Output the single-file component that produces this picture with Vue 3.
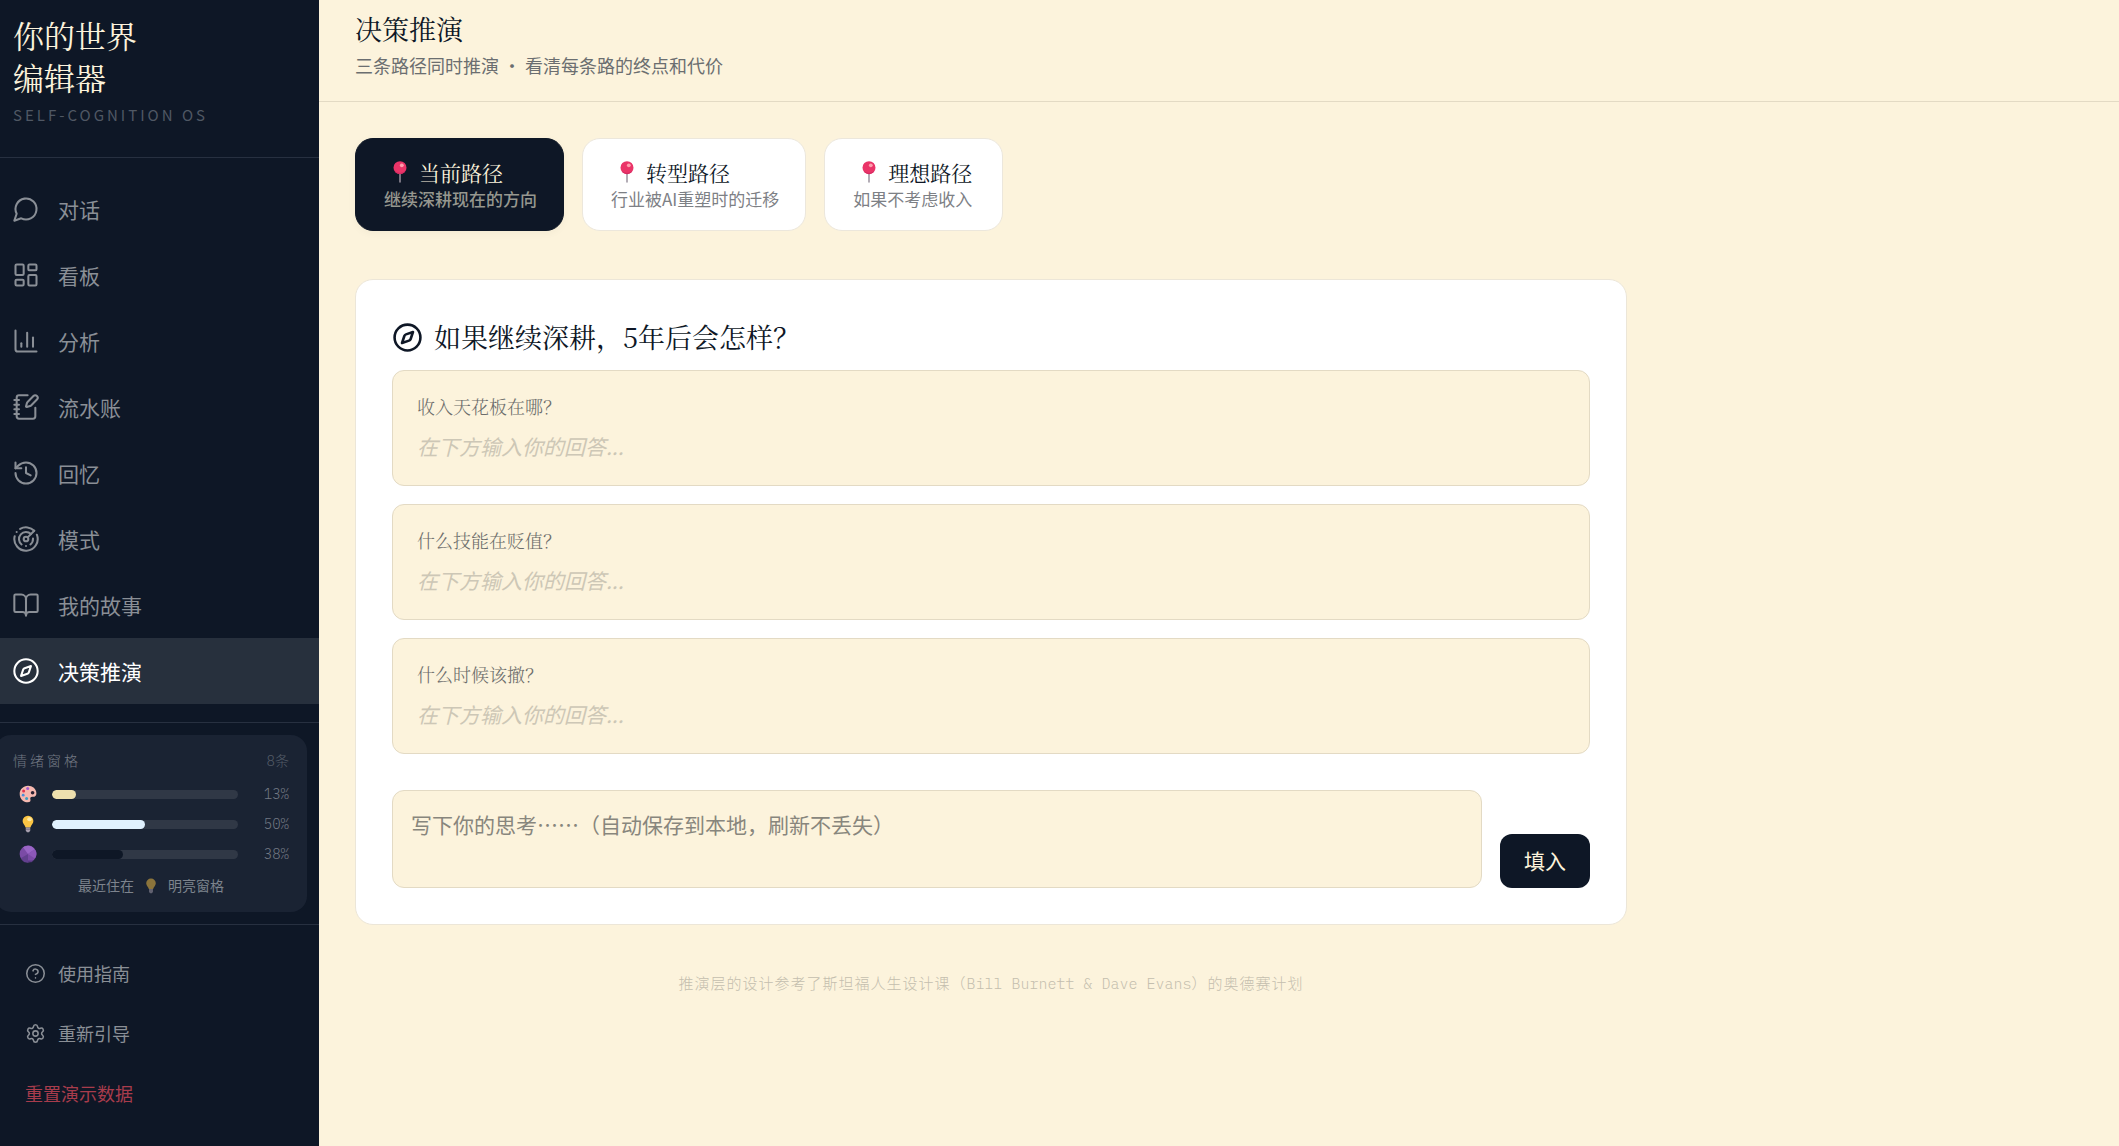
<template>
  <div class="layout">
    <!-- 侧边栏 -->
    <aside class="sidebar">
      <div class="brand">
        <h1 class="brand-title">你的世界<br>编辑器</h1>
        <p class="brand-sub">SELF-COGNITION OS</p>
      </div>
      <nav class="nav">
        <a
          v-for="item in navItems"
          :key="item.label"
          href="#"
          class="nav-item"
          :class="{ active: item.label === currentNav }"
          @click.prevent="currentNav = item.label"
        >
          <svg class="nav-icon" viewBox="0 0 24 24">
            <path v-for="d in item.icon" :key="d" :d="d" />
          </svg>
          <span>{{ item.label }}</span>
        </a>
      </nav>

      <!-- 情绪窗格 -->
      <section class="mood-wrap">
        <div class="mood">
          <div class="mood-head">
            <span class="mood-title">情绪窗格</span>
            <span class="mood-count">8条</span>
          </div>
          <div v-for="mood in moods" :key="mood.name" class="mood-row">
            <svg v-if="mood.name === 'palette'" class="mood-icon" viewBox="0 0 18 18">
              <path d="M9 .8C4.3.8.7 4.4.7 9c0 4.700 3.600 8.300 8 8.300 2.500 0 3.100-1.400 2.700-2.800-.5-1.700.3-2.800 2-2.700 2.300.2 4-.8 4-3.600C17.300 3.900 13.500.8 9 .8z" fill="#f6b9b0" />
              <circle cx="13.600" cy="7.800" r="1.800" fill="#2b2030" />
              <circle cx="8.700" cy="3.600" r="1.500" fill="#a45bd0" />
              <circle cx="4.600" cy="5.900" r="1.500" fill="#e2364f" />
              <circle cx="4.200" cy="10.200" r="1.400" fill="#4a8fd8" />
              <circle cx="7.600" cy="13.400" r="1.500" fill="#3d9fc0" />
            </svg>
            <svg v-else-if="mood.name === 'bulb'" class="mood-icon" viewBox="0 0 18 18">
              <path d="M9 .7a5.300 5.300 0 0 0-5.400 5.300c0 2.700 2.300 3.800 3 6.500h4.800c.7-2.700 3-3.800 3-6.500A5.300 5.300 0 0 0 9 .7z" fill="#fbc544" />
              <ellipse cx="10.500" cy="4.300" rx="2.300" ry="2" fill="#ffe9a0" />
              <path d="M6.800 12.500h4.400v3.200L10 17.200H8l-1.200-1.500z" fill="#a79fae" />
              <path d="M6.800 14.200h4.400" stroke="#776f80" stroke-width="1" />
            </svg>
            <svg v-else class="mood-icon" viewBox="0 0 18 18">
              <circle cx="9" cy="9" r="8.400" fill="#7b4ba6" />
              <path d="M3.600 15.400h10.800L12.500 17.300h-7z" fill="#5b3a85" />
              <path d="M9 9L4 2.300A8.400 8.400 0 0 1 15.800 4.200z" fill="#9a66c6" />
              <path d="M9 9l-7.200 4.200A8.400 8.400 0 0 0 9 17.400z" fill="#63408f" />
              <path d="M9 9l6.800-4.800a8.400 8.400 0 0 1 .2 9.400z" fill="#8c58b8" />
            </svg>
            <div class="mood-track">
              <div class="mood-fill" :class="mood.name" :style="{ width: mood.value + '%' }"></div>
            </div>
            <span class="mood-value">{{ mood.value }}%</span>
          </div>
          <p class="mood-foot">
            <span>最近住在</span>
            <svg class="foot-icon" viewBox="0 0 18 18">
              <path d="M9 .7a5.300 5.300 0 0 0-5.400 5.300c0 2.700 2.300 3.800 3 6.500h4.800c.7-2.700 3-3.800 3-6.500A5.300 5.300 0 0 0 9 .7z" fill="#fbc544" />
              <path d="M6.800 12.500h4.400v3.200L10 17.200H8l-1.200-1.500z" fill="#a79fae" />
            </svg>
            <span>明亮窗格</span>
          </p>
        </div>
      </section>

      <div class="tools">
        <button v-for="tool in tools" :key="tool.label" type="button" class="tool">
          <svg class="tool-icon" viewBox="0 0 24 24">
            <path v-for="d in tool.icon" :key="d" :d="d" />
          </svg>
          <span>{{ tool.label }}</span>
        </button>
        <button type="button" class="tool danger">重置演示数据</button>
      </div>
    </aside>

    <!-- 主区域 -->
    <main class="main">
      <header class="header">
        <h2 class="header-title">决策推演</h2>
        <p class="header-sub">三条路径同时推演 · 看清每条路的终点和代价</p>
      </header>

      <div class="content">
        <div class="tabs">
          <button
            v-for="(path, index) in paths"
            :key="path.title"
            type="button"
            class="tab"
            :class="{ active: index === currentPath }"
            @click="currentPath = index"
          >
            <span class="tab-title">
              <svg class="pin" viewBox="0 0 14 22">
                <path d="M7 11v10" stroke="#9a929e" stroke-width="1.500" stroke-linecap="round" />
                <circle cx="7" cy="6.700" r="6.500" fill="#ea3468" />
                <path d="M1.500 9.800a6.500 6.500 0 0 0 11 0 8 8 0 0 1-11 0z" fill="#c92560" />
                <circle cx="8.800" cy="4.300" r="1.900" fill="#ff9dac" />
              </svg>
              <span>{{ path.title }}</span>
            </span>
            <span class="tab-desc">{{ path.desc }}</span>
          </button>
        </div>

        <section class="card">
          <h3 class="card-title">
            <svg class="card-icon" viewBox="0 0 24 24">
              <path v-for="d in compass" :key="d" :d="d" />
            </svg>
            <span>{{ paths[currentPath].question }}</span>
          </h3>
          <div class="questions">
            <div v-for="q in questions" :key="q" class="question">
              <p class="question-text">{{ q }}</p>
              <p class="question-empty">在下方输入你的回答...</p>
            </div>
          </div>
          <div class="editor">
            <textarea
              v-model="draft"
              class="editor-input"
              aria-label="写下你的思考"
              placeholder="写下你的思考……（自动保存到本地，刷新不丢失）"
            ></textarea>
            <button type="button" class="editor-btn">填入</button>
          </div>
        </section>

        <p class="note">推演层的设计参考了斯坦福人生设计课（<span class="latin">Bill Burnett &amp; Dave Evans</span>）的奥德赛计划</p>
      </div>
    </main>
  </div>
</template>

<script setup>
import { ref } from 'vue'

const currentNav = ref('决策推演')
const currentPath = ref(0)
const draft = ref('')

const circle = 'M12 2a10 10 0 1 0 0 20a10 10 0 1 0 0-20z'
const compass = [
  circle,
  'M16.240 7.760l-1.804 5.411a2 2 0 0 1-1.265 1.265L7.760 16.240l1.804-5.411a2 2 0 0 1 1.265-1.265z',
]

const navItems = [
  { label: '对话', icon: ['M7.900 20A9 9 0 1 0 4 16.100L2 22z'] },
  {
    label: '看板',
    icon: [
      'M4 3h5a1 1 0 0 1 1 1v7a1 1 0 0 1-1 1H4a1 1 0 0 1-1-1V4a1 1 0 0 1 1-1z',
      'M15 3h5a1 1 0 0 1 1 1v3a1 1 0 0 1-1 1h-5a1 1 0 0 1-1-1V4a1 1 0 0 1 1-1z',
      'M15 12h5a1 1 0 0 1 1 1v7a1 1 0 0 1-1 1h-5a1 1 0 0 1-1-1v-7a1 1 0 0 1 1-1z',
      'M4 16h5a1 1 0 0 1 1 1v3a1 1 0 0 1-1 1H4a1 1 0 0 1-1-1v-3a1 1 0 0 1 1-1z',
    ],
  },
  { label: '分析', icon: ['M3 3v16a2 2 0 0 0 2 2h16', 'M18 17V9', 'M13 17V5', 'M8 17v-3'] },
  {
    label: '流水账',
    icon: [
      'M13.400 2H6a2 2 0 0 0-2 2v16a2 2 0 0 0 2 2h12a2 2 0 0 0 2-2v-7.400',
      'M2 6h4',
      'M2 10h4',
      'M2 14h4',
      'M2 18h4',
      'M21.378 5.626a1 1 0 1 0-3.004-3.004l-5.010 5.012a2 2 0 0 0-.506.854l-.837 2.870a.5.5 0 0 0 .620.620l2.870-.837a2 2 0 0 0 .854-.506z',
    ],
  },
  { label: '回忆', icon: ['M3 12a9 9 0 1 0 9-9 9.750 9.750 0 0 0-6.740 2.740L3 8', 'M3 3v5h5', 'M12 7v5l4 2'] },
  {
    label: '模式',
    icon: [
      'M19.070 4.930A10 10 0 0 0 6.990 3.340',
      'M4 6h.01',
      'M2.290 9.620A10 10 0 1 0 21.310 8.350',
      'M16.240 7.760A6 6 0 1 0 8.230 16.670',
      'M12 18h.01',
      'M17.990 11.660A6 6 0 0 1 15.770 16.670',
      'M12 10a2 2 0 1 0 0 4a2 2 0 1 0 0-4z',
      'M13.410 10.590l5.660-5.660',
    ],
  },
  {
    label: '我的故事',
    icon: [
      'M12 7v14',
      'M3 18a1 1 0 0 1-1-1V4a1 1 0 0 1 1-1h5a4 4 0 0 1 4 4 4 4 0 0 1 4-4h5a1 1 0 0 1 1 1v13a1 1 0 0 1-1 1h-6a3 3 0 0 0-3 3 3 3 0 0 0-3-3z',
    ],
  },
  { label: '决策推演', icon: compass },
]

const moods = [
  { name: 'palette', value: 13 },
  { name: 'bulb', value: 50 },
  { name: 'orb', value: 38 },
]

const tools = [
  { label: '使用指南', icon: [circle, 'M9.090 9a3 3 0 0 1 5.830 1c0 2-3 3-3 3', 'M12 17h.01'] },
  {
    label: '重新引导',
    icon: [
      'M9.671 4.136a2.340 2.340 0 0 1 4.659 0 2.340 2.340 0 0 0 3.319 1.915 2.340 2.340 0 0 1 2.330 4.033 2.340 2.340 0 0 0 0 3.831 2.340 2.340 0 0 1-2.330 4.033 2.340 2.340 0 0 0-3.319 1.915 2.340 2.340 0 0 1-4.659 0 2.340 2.340 0 0 0-3.320-1.915 2.340 2.340 0 0 1-2.330-4.033 2.340 2.340 0 0 0 0-3.831A2.340 2.340 0 0 1 6.350 6.051a2.340 2.340 0 0 0 3.319-1.915',
      'M12 9a3 3 0 1 0 0 6a3 3 0 1 0 0-6z',
    ],
  },
]

const paths = [
  { title: '当前路径', desc: '继续深耕现在的方向', question: '如果继续深耕，5年后会怎样？' },
  { title: '转型路径', desc: '行业被AI重塑时的迁移', question: '如果行业被AI重塑，你会迁移到哪？' },
  { title: '理想路径', desc: '如果不考虑收入', question: '如果不考虑收入，你会做什么？' },
]

const questions = ['收入天花板在哪？', '什么技能在贬值？', '什么时候该撤？']
</script>

<style>
body {
  margin: 0;
  background: #fcf3dc;
}
</style>

<style scoped>
.layout {
  --ink: #0e1726;
  --cream: #fcf3dc;
  --line: #e3dac4;
  --serif: "Noto Serif CJK SC", "Noto Serif SC", "Source Han Serif SC", "Noto Sans CJK SC", serif;
  --mono: "IBM Plex Mono", "Liberation Mono", "Noto Sans CJK SC", monospace;
  display: flex;
  min-height: 100vh;
  font-family: "Noto Sans CJK SC", sans-serif;
  color: var(--ink);
}
h1, h2, h3, p {
  margin: 0;
  font-weight: 400;
}
button {
  font-family: inherit;
  cursor: pointer;
}
svg {
  flex: none;
}

/* 侧边栏 */
.sidebar {
  flex: none;
  width: 319px;
  background: var(--ink);
  overflow: hidden;
}
.brand {
  padding: 14px 13px 30px;
  border-bottom: 1px solid #273040;
}
.brand-title {
  font-family: var(--serif);
  font-size: 31px;
  line-height: 42px;
  color: var(--cream);
}
.brand-sub {
  margin-top: 5px;
  font-size: 15px;
  line-height: 24px;
  letter-spacing: 3px;
  color: #505864;
}
.nav {
  padding: 18px 0;
  border-bottom: 1px solid #273040;
}
.nav-item {
  display: flex;
  align-items: center;
  gap: 18px;
  height: 66px;
  padding-left: 12px;
  font-size: 21px;
  color: #8a8f96;
  text-decoration: none;
}
.nav-item.active {
  background: #27303d;
  color: #fff;
}
.nav-icon, .tool-icon, .card-icon {
  fill: none;
  stroke: currentColor;
  stroke-width: 1.75;
  stroke-linecap: round;
  stroke-linejoin: round;
}
.nav-icon {
  width: 28px;
  height: 28px;
}

/* 情绪窗格 */
.mood-wrap {
  padding: 12px 12px 12px 0;
  border-bottom: 1px solid #273040;
}
.mood {
  margin-left: -5px;
  padding: 14px 18px 14px 18px;
  border-radius: 16px;
  background: #1a2333;
  font-family: var(--mono);
  font-size: 14px;
  font-weight: 300;
  line-height: 24px;
  color: #737984;
}
.mood-head {
  display: flex;
  justify-content: space-between;
  margin-bottom: 6px;
}
.mood-title {
  letter-spacing: 3px;
}
.mood-count {
  color: #535b67;
}
.mood-row {
  display: flex;
  align-items: center;
  height: 30px;
}
.mood-icon {
  width: 18px;
  height: 18px;
  margin: 0 15px 0 6px;
}
.mood-track {
  flex: 1;
  height: 9px;
  border-radius: 5px;
  background: #303846;
  overflow: hidden;
}
.mood-fill {
  height: 100%;
  border-radius: 5px;
}
.mood-fill.palette {
  background: #eee0ae;
}
.mood-fill.bulb {
  background: #e0f1fe;
}
.mood-fill.orb {
  background: #0e1726;
}
.mood-value {
  width: 51px;
  text-align: right;
}
.mood-foot {
  display: flex;
  align-items: center;
  justify-content: center;
  gap: 9px;
  margin-top: 5px;
  color: #7d838d;
}
.foot-icon {
  width: 16px;
  height: 16px;
  opacity: 0.5;
}

.tools {
  padding: 18px 0;
}
.tool {
  display: flex;
  align-items: center;
  gap: 12px;
  width: 100%;
  height: 60px;
  padding: 0 25px;
  border: 0;
  background: none;
  font-size: 18px;
  color: #8a8f96;
}
.tool-icon {
  width: 21px;
  height: 21px;
}
.tool.danger {
  color: #a83c4c;
}

/* 主区域 */
.main {
  flex: 1;
  min-width: 0;
  background: var(--cream);
}
.header {
  padding: 10px 36px 22px;
  border-bottom: 1px solid var(--line);
}
.header-title {
  font-family: var(--serif);
  font-size: 27px;
  line-height: 38px;
}
.header-sub {
  margin-top: 3px;
  font-size: 18px;
  line-height: 28px;
  color: #6b6e70;
}
.content {
  max-width: 1272px;
  padding: 36px;
}
.tabs {
  display: flex;
  gap: 18px;
  margin-bottom: 48px;
}
.tab {
  padding: 19px 26px 18px 28px;
  border: 1px solid #ece7dc;
  border-radius: 18px;
  background: #fff;
  color: var(--ink);
  text-align: left;
}
.tab-title {
  display: flex;
  align-items: center;
  gap: 12px;
  padding: 0 4px 0 9px;
  font-family: var(--serif);
  font-size: 21px;
  line-height: 28px;
}
.pin {
  width: 14px;
  height: 22px;
}
.tab-desc {
  display: block;
  font-size: 17px;
  line-height: 26px;
  color: #7d8085;
}
.tab.active {
  border-color: var(--ink);
  background: var(--ink);
  color: var(--cream);
  box-shadow: 0 2px 8px rgba(14, 23, 38, 0.04);
}
.tab.active .tab-desc {
  font-weight: 500;
  color: #96978f;
}

.card {
  padding: 35px 36px 36px;
  border: 1px solid #ece6d8;
  border-radius: 18px;
  background: #fff;
}
.card-title {
  display: flex;
  align-items: center;
  gap: 11px;
  margin-bottom: 11px;
  font-family: var(--serif);
  font-size: 27px;
  line-height: 44px;
}
.card-icon {
  width: 31px;
  height: 31px;
  stroke-width: 2;
}
.questions {
  display: flex;
  flex-direction: column;
  gap: 18px;
}
.question {
  padding: 21px 24px;
  border: 1px solid var(--line);
  border-radius: 12px;
  background: var(--cream);
}
.question-text {
  margin-bottom: 8px;
  font-family: var(--serif);
  font-size: 18px;
  font-weight: 300;
  line-height: 28px;
  color: #6b6c6a;
}
.question-empty {
  font-size: 21px;
  font-style: italic;
  line-height: 36px;
  color: #cdc7b6;
}
.editor {
  display: flex;
  align-items: flex-end;
  gap: 18px;
  margin-top: 36px;
}
.editor-input {
  flex: 1;
  box-sizing: border-box;
  height: 98px;
  padding: 16px 18px;
  border: 1px solid var(--line);
  border-radius: 12px;
  outline: none;
  resize: none;
  background: var(--cream);
  font-family: inherit;
  font-size: 21px;
  line-height: 34px;
  color: var(--ink);
}
.editor-input::placeholder {
  color: #88867d;
}
.editor-btn {
  height: 54px;
  padding: 0 24px 2px;
  border: 0;
  border-radius: 12px;
  background: var(--ink);
  font-size: 21px;
  font-weight: 400;
  color: var(--cream);
}
.note {
  margin-top: 46px;
  font-family: var(--mono);
  font-size: 15px;
  font-weight: 300;
  line-height: 26px;
  letter-spacing: 1px;
  text-align: center;
  color: #c4beae;
}
.latin {
  letter-spacing: 0;
}
</style>
